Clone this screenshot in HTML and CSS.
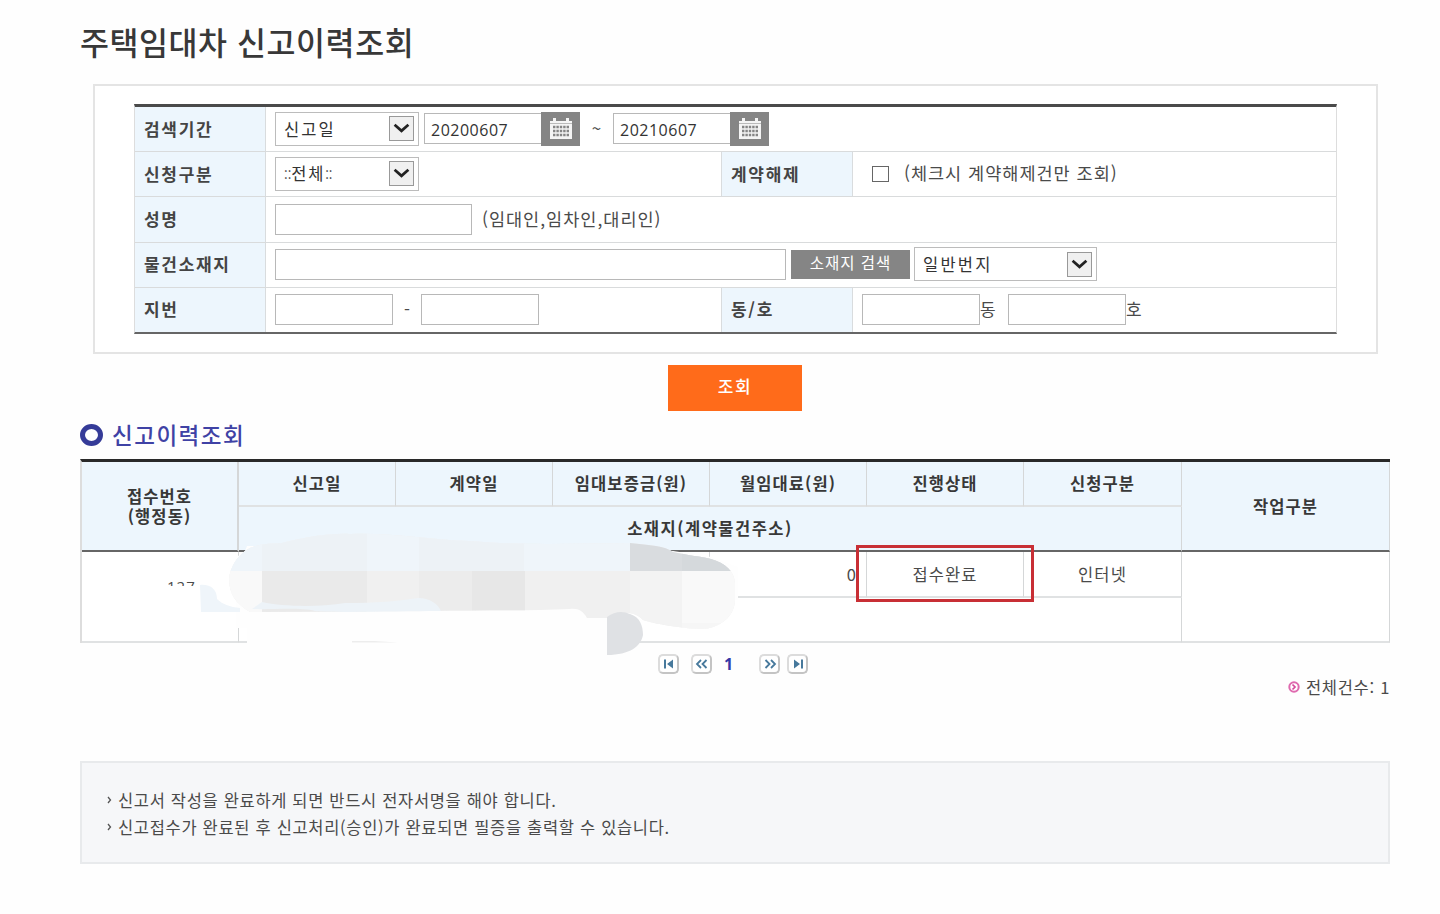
FILE: index.html
```html
<!DOCTYPE html>
<html lang="ko">
<head>
<meta charset="utf-8">
<title>주택임대차 신고이력조회</title>
<link rel="stylesheet" href="styles.css">
</head>
<body>
<svg class="defs" width="0" height="0">
  <symbol id="calendar" viewBox="0 0 24 24">
    <path d="M1 4h22v18H1z M4 1h3v4H4z M17 1h3v4h-3z" fill="#f4f4f4"/>
    <path d="M1 6.5h22" stroke="#bbb" stroke-width="1"/>
    <path d="M4 10h16M4 14h16M4 18h16" stroke="#858585" stroke-width="2.6" stroke-dasharray="2.4 1"/>
  </symbol>
  <symbol id="chevron" viewBox="0 0 25 25">
    <path d="M5 8.500l7.500 6.500 7.500-6.500" fill="none" stroke="#222" stroke-width="3"/>
  </symbol>
</svg>
<main class="page">
  <h1 class="title">주택임대차 신고이력조회</h1>
  <section class="search">
    <div class="form">
      <div class="row">
        <div class="label">검색기간</div>
        <div class="field wide">
          <div class="select"><span>신고일</span><svg class="arrow"><use href="#chevron"/></svg></div>
          <div class="input date">20200607</div>
          <div class="cal"><svg width="24" height="24"><use href="#calendar"/></svg></div>
          <span class="tilde">~</span>
          <div class="input date second">20210607</div>
          <div class="cal"><svg width="24" height="24"><use href="#calendar"/></svg></div>
        </div>
      </div>
      <div class="row">
        <div class="label">신청구분</div>
        <div class="field">
          <div class="select all"><span><span class="colons">::</span>전체<span class="colons">::</span></span><svg class="arrow"><use href="#chevron"/></svg></div>
        </div>
        <div class="label">계약해제</div>
        <div class="field"><i class="check"></i><span class="hint">(체크시 계약해제건만 조회)</span></div>
      </div>
      <div class="row">
        <div class="label">성명</div>
        <div class="field wide"><div class="input name"></div><span class="hint names">(임대인,임차인,대리인)</span></div>
      </div>
      <div class="row">
        <div class="label">물건소재지</div>
        <div class="field wide">
          <div class="input address"></div>
          <div class="find">소재지 검색</div>
          <div class="select lot"><span>일반번지</span><svg class="arrow"><use href="#chevron"/></svg></div>
        </div>
      </div>
      <div class="row">
        <div class="label">지번</div>
        <div class="field"><div class="input small"></div><span class="dash">-</span><div class="input small"></div></div>
        <div class="label">동/호</div>
        <div class="field"><div class="input small"></div><span class="unit">동</span><div class="input small ho"></div><span class="unit">호</span></div>
      </div>
    </div>
  </section>
  <div class="submit">조회</div>
  <h2 class="subtitle"><i class="ring"></i><span>신고이력조회</span></h2>
  <section class="results">
    <div class="cell head number">접수번호<br>(행정동)</div>
    <div class="cell head">신고일</div>
    <div class="cell head">계약일</div>
    <div class="cell head">임대보증금(원)</div>
    <div class="cell head">월임대료(원)</div>
    <div class="cell head">진행상태</div>
    <div class="cell head">신청구분</div>
    <div class="cell head work">작업구분</div>
    <div class="cell head place">소재지(계약물건주소)</div>
    <div class="cell body id"><span class="cut">127</span></div>
    <div class="cell body"></div>
    <div class="cell body"></div>
    <div class="cell body"></div>
    <div class="cell body amount">0</div>
    <div class="cell body">접수완료</div>
    <div class="cell body">인터넷</div>
    <div class="cell body job"></div>
    <div class="cell body addr"></div>
    <svg class="mask" viewBox="160 530 600 130">
      <defs>
        <clipPath id="blob"><path d="M245 551C256 543 270 544 282 543C305 537 330 533 350 534C390 532 430 540 470 541C530 546 580 543 630 543C650 545 665 546 673 552C690 556 700 556 711 559C725 563 735 571 735 584V600C735 616 720 629 700 629C680 628 655 624 643 620C632 608 615 614 607 618L587 618C583 611 578 608 570 609C530 611 480 610 430 611L250 612C236 604 229 594 229 579C230 567 237 557 245 551Z"/></clipPath>
      </defs>
      <path d="M245 551L238 556L236 594V628H247V645H630V610L738 600V567L711 557L673 551L630 546H247Z" fill="#fefefe"/>
      <g clip-path="url(#blob)">
        <path d="M225 530h520v105H225z" fill="#f0f0f0"/>
        <path d="M225 530h410v41H225z" fill="#eff5fa"/>
        <path d="M262 530h105v41H262zM419 530h105v41H419z" fill="#edf2f6"/>
        <path d="M630 530h110v41H630z" fill="#d9dcdf"/>
        <path d="M682 530h58v41H682z" fill="#d5d9dc"/>
        <path d="M225 571h37v64H225zM682 571h60v64H682z" fill="#f9f9f9"/>
        <path d="M262 571h105v64H262z" fill="#eaeaea"/>
        <path d="M419 571h53v64H419z" fill="#ececec"/>
        <path d="M472 571h53v64H472z" fill="#e7e7e7"/>
        <path d="M630 571h52v64H630z" fill="#f3f3f3"/>
        <path d="M682 623h60v10H682z" fill="#f6f6f6"/>
      </g>
      <path d="M262 602C285 607 320 607 345 603C375 603 400 601 418 598C430 598 438 604 441 611C400 611 340 613 315 611C300 607 270 610 252 609Z" fill="#edf3f8"/>
      <path d="M200 585C210 584 217 589 217 599C222 604 230 607 240 608V612H201Z" fill="#eff5fa"/>
      <path d="M607 617C615 611 623 611 630 614C640 617 643 626 643 635C641 646 630 655 607 655Z" fill="#dfe1e4"/>
      <path d="M352 641h22l24 1.4h-46z" fill="#ededed"/>
    </svg>
    <div class="highlight"></div>
  </section>
  <nav class="pager">
    <span class="page-button"><svg width="14" height="14" viewBox="0 0 14 14"><path d="M2 2.500h2v9H2zM11 2.500v9L5 7z" fill="#47799c"/></svg></span>
    <span class="page-button prev"><svg width="14" height="14" viewBox="0 0 14 14"><path d="M6 3L2 7l4 4M11.500 3L7.500 7l4 4" fill="none" stroke="#47799c" stroke-width="1.8"/></svg></span>
    <b class="current">1</b>
    <span class="page-button next"><svg width="14" height="14" viewBox="0 0 14 14"><path d="M2.500 3l4 4-4 4M8 3l4 4-4 4" fill="none" stroke="#47799c" stroke-width="1.8"/></svg></span>
    <span class="page-button last"><svg width="14" height="14" viewBox="0 0 14 14"><path d="M10 2.500h2v9h-2zM3 2.500v9L9 7z" fill="#47799c"/></svg></span>
  </nav>
  <div class="total"><svg width="12" height="12" viewBox="0 0 12 12"><circle cx="6" cy="6" r="4.700" fill="#fff" stroke="#df6aaf" stroke-width="2"/><path d="M4.500 3.500L7 6L4.500 8.500" fill="none" stroke="#d64b9c" stroke-width="1.700"/></svg><span>전체건수: 1</span></div>
  <ul class="notice">
    <li><svg width="5" height="8" viewBox="0 0 5 8"><path d="M1 1l2.500 3L1 7" fill="none" stroke="#555" stroke-width="1.300"/></svg><span class="line-a">신고서 작성을 완료하게 되면 반드시 전자서명을 해야 합니다.</span></li>
    <li><svg width="5" height="8" viewBox="0 0 5 8"><path d="M1 1l2.500 3L1 7" fill="none" stroke="#555" stroke-width="1.300"/></svg><span class="line-b">신고접수가 완료된 후 신고처리(승인)가 완료되면 필증을 출력할 수 있습니다.</span></li>
  </ul>
</main>
</body>
</html>
```
FILE: styles.css
```css
* { box-sizing: border-box; }
body { margin: 0; background: #fefefe; color: #4a4a4a; font: 17px/20px "Noto Sans CJK KR", sans-serif; }
.defs { position: absolute; }
.page { width: 1310px; height: 914px; margin-left: 80px; display: flex; flex-direction: column; overflow: hidden; }
.title { margin: 0; height: 84px; flex: none; padding-top: 21px; font-size: 31.5px; line-height: 40px; font-weight: 500; letter-spacing: .55px; color: #383838; white-space: nowrap; }

.search { flex: none; width: 1285px; height: 270px; margin-left: 13px; padding: 18px 39px; border: 2px solid #e4e4e4; background: #fff; }
.form { width: 1203px; height: 230px; border-top: 3px solid #4a4a4a; border-bottom: 2px solid #666; border-right: 1px solid #ddd; border-left: 1px solid #ddd; display: flex; flex-direction: column; }
.row { flex: 1; display: flex; min-height: 0; border-bottom: 1px solid #d9dbdc; }
.row:last-child { border-bottom: 0; }
.label { width: 131px; display: flex; align-items: center; padding: 0 0 1px 9px; background: #edf6fd; border-right: 1px solid #d9dcde; font-size: 17px; font-weight: 700; letter-spacing: 1.700px; color: #444; white-space: nowrap; }
.field { width: 455px; display: flex; align-items: center; padding: 0 0 1px 9px; white-space: nowrap; }
.field + .label { width: 132px; border-left: 1px solid #d9dcde; }
.wide { width: 1060px; }
.input { flex: none; height: 31px; border: 1px solid #b8b8b8; background: #fff; }
.select { width: 144px; height: 34px; border: 1px solid #bcbcbc; padding: 0 4px 0 8px; display: flex; align-items: center; justify-content: space-between; letter-spacing: 2.100px; font-size: 16.500px; color: #333; background: #fff; }
.all { letter-spacing: 1.800px; }
.colons { font-size: 13px; letter-spacing: 0; }
.arrow { width: 25px; height: 25px; border: 1px solid #999; background: #f0f0f0; }
.date { width: 117px; margin-left: 5px; padding: 6px 0 0 6px; font: 16px/20px "Open Sans", sans-serif; letter-spacing: .5px; color: #333; border-right: 0; }
.cal { width: 39px; height: 34px; display: flex; align-items: center; justify-content: center; background: #858585; }
.tilde { width: 33px; padding-bottom: 2px; text-align: center; }
.second { margin-left: 0; }
.check { width: 17px; height: 16px; margin-left: 10px; border: 1px solid #666; }
.hint { margin: 0 0 1px 15px; font-size: 17.500px; letter-spacing: 1px; }
.name { width: 197px; }
.names { margin-left: 10px; letter-spacing: 1px; }
.address { width: 511px; }
.find { width: 119px; height: 29px; margin: 0 4px 0 5px; background: #858585; color: #fff; text-align: center; font-size: 15.500px; line-height: 24px; letter-spacing: 1px; }
.lot { width: 183px; letter-spacing: 2.200px; }
.small { width: 118px; }
.dash { width: 28px; text-align: center; }
.unit { width: 17px; }
.ho { margin-left: 11px; }

.submit { flex: none; width: 134px; height: 46px; margin: 11px 0 0 588px; background: #ff6b1a; color: #fff; text-align: center; font-size: 17px; line-height: 41px; letter-spacing: 1.500px; font-weight: 500; }
.subtitle { flex: none; height: 48px; margin: 0; display: flex; align-items: center; gap: 9px; font-size: 22.500px; letter-spacing: 1.500px; font-weight: 500; color: #3f42a5; white-space: nowrap; }
.subtitle span { padding-bottom: 3px; }
.ring { width: 23px; height: 22px; border: 5px solid #353b98; border-radius: 50%; }

.results { position: relative; flex: none; height: 184px; display: grid; grid-template-columns: 157px 157px 157px 157px 157px 157px 158px 208px; grid-template-rows: 45px 45px 46px 45px; border-top: 3px solid #292929; border-left: 2px solid #ddd; }
.cell { display: flex; align-items: center; justify-content: center; padding-bottom: 1px; border-right: 1px solid #d5d7d8; border-bottom: 2px solid #e0e2e3; white-space: nowrap; }
.head { background: #edf6fd; color: #383838; font-size: 16.500px; font-weight: 700; letter-spacing: 1.100px; }
.number, .work { grid-row: 1 / 3; text-align: center; border-bottom-color: #666; padding-bottom: 0; }
.number { grid-column: 1; border-right-width: 2px; }
.work { grid-column: 8; }
.place { grid-column: 2 / 8; grid-row: 2; border-bottom-color: #666; letter-spacing: 1.500px; }
.body { background: #fff; font-size: 16.500px; letter-spacing: 1.100px; }
.id { grid-row: 3 / 5; grid-column: 1; align-items: flex-start; justify-content: flex-start; padding: 24px 0 0 85px; }
.cut { height: 10px; overflow: hidden; font: 15px/20px "Open Sans", sans-serif; letter-spacing: 1px; }
.amount { justify-content: flex-end; padding-right: 9px; }
.job { grid-row: 3 / 5; grid-column: 8; }
.addr { grid-column: 2 / 8; grid-row: 4; }
.mask { position: absolute; left: 78px; top: 68px; width: 600px; height: 130px; }
.highlight { position: absolute; left: 774px; top: 83px; width: 178px; height: 57px; border: 3px solid #c82f35; }

.pager { flex: none; height: 22px; margin: 10px 0 0 578px; display: flex; align-items: center; }
.page-button { width: 21px; height: 20px; display: flex; align-items: center; justify-content: center; border: 2px solid #dcdcdc; border-right-color: #c4c4c4; border-bottom-color: #c4c4c4; border-radius: 5px; background: #fff; }
.prev { margin-left: 12px; }
.current { width: 46px; padding-left: 12px; font: 700 16px/20px "Open Sans", sans-serif; color: #3438a7; }
.next { margin-left: 1px; }
.last { margin-left: 7px; }
.total { flex: none; height: 22px; margin-top: 1px; display: flex; align-items: center; justify-content: flex-end; gap: 6px; font-size: 16.500px; letter-spacing: .7px; }
.notice { flex: none; height: 103px; margin: 63px 0 0; padding: 24px 0 0 25px; border: 2px solid #e8eaec; background: #f6f7f9; list-style: none; font-size: 16.500px; line-height: 26.500px; }
.notice li { display: flex; align-items: center; gap: 6px; white-space: nowrap; }
.line-a { letter-spacing: .67px; }
.line-b { letter-spacing: .68px; }
```
